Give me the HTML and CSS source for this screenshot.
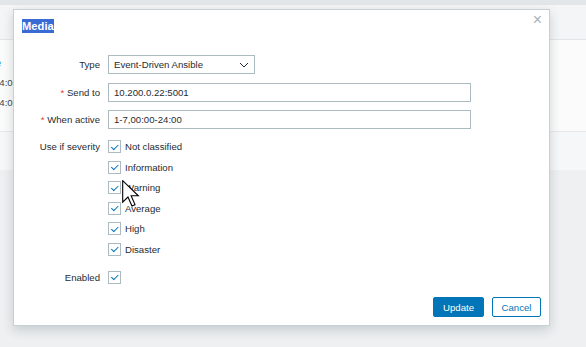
FILE: index.html
```html
<!DOCTYPE html>
<html lang="en">
<head>
  <meta charset="UTF-8" />
  <title>Media</title>
  <link rel="stylesheet" href="styles.css">
</head>
<body>

  <!-- Page behind the dialog -->
  <div class="page">
    <div class="page-top"></div>
    <div class="page-nav"></div>
    <div class="page-panel">
      <div class="page-row"><span class="link">Active</span></div>
      <div class="page-row"><span class="cut">24:00</span></div>
      <div class="page-row"><span class="cut">24:00</span></div>
    </div>
    <div class="page-foot"></div>
  </div>

  <!-- Media dialog -->
  <div class="dialog">
    <div class="dialog-head">
      <h4 class="dialog-title">Media</h4>
      <span class="close">&times;</span>
    </div>

    <form class="form">
      <div class="row">
        <label class="label">Type</label>
        <div class="select">
          <span>Event-Driven Ansible</span>
          <svg width="10" height="6" viewBox="0 0 10 6"><polyline points="1,1 5,5 9,1" fill="none" stroke="#1f2c33" stroke-width="1"/></svg>
        </div>
      </div>

      <div class="row row-send">
        <label class="label"><i class="req">*</i> Send to</label>
        <div class="input">10.200.0.22:5001</div>
      </div>

      <div class="row row-active">
        <label class="label"><i class="req">*</i> When active</label>
        <div class="input">1-7,00:00-24:00</div>
      </div>

      <div class="row row-top row-severity">
        <label class="label">Use if severity</label>
        <ul class="checks">
          <li><span class="box"></span>Not classified</li>
          <li><span class="box"></span>Information</li>
          <li><span class="box"></span>Warning</li>
          <li><span class="box"></span>Average</li>
          <li><span class="box"></span>High</li>
          <li><span class="box"></span>Disaster</li>
        </ul>
      </div>

      <div class="row row-top row-enabled">
        <label class="label">Enabled</label>
        <ul class="checks">
          <li><span class="box"></span></li>
        </ul>
      </div>
    </form>

    <div class="dialog-foot">
      <button class="btn btn-primary" type="button">Update</button>
      <button class="btn btn-alt" type="button">Cancel</button>
    </div>
  </div>

  <!-- Mouse pointer -->
  <svg class="cursor" width="18" height="27" viewBox="0 0 13 19.5">
    <path d="M0.5,0.5 L0.5,16 L4.3,12.3 L7.2,18.8 L9.4,17.8 L6.6,11.4 L11.8,11.4 Z" fill="#fff" stroke="#000" stroke-width="0.8" stroke-linejoin="miter"/>
  </svg>

</body>
</html>
```

FILE: styles.css
```css
:root {
  --text: #1f2c33;
  --border: #acbbc2;
  --blue: #0275b8;
  --red: #e33734;
}

body {
  margin: 0;
  font-family: "Liberation Sans", Arial, sans-serif;
  font-size: 9.6px;
  color: var(--text);
  background: #eef0f1;
  overflow: hidden;
}

/* Page behind the dialog */
.page {
  height: 347px;
}

.page-top {
  height: 5px;
  background: #e3e6e8;
}

.page-nav {
  height: 34px;
  background: #f4f5f6;
  border-bottom: 1px solid #e3e6e8;
}

.page-panel {
  box-sizing: border-box;
  height: 92px;
  padding-top: 13px;
  background: #fbfbfb;
  border-bottom: 1px solid #e6e9eb;
}

.page-row {
  height: 20px;
  line-height: 20px;
  margin-left: -25px;
}

.page-row .link {
  color: var(--blue);
}

.page-row .cut {
  margin-left: 19px;
  color: #3b474e;
}

.page-foot {
  height: 38px;
  background: #f6f7f8;
}

/* Dialog */
.dialog {
  position: absolute;
  left: 13px;
  top: 9px;
  width: 537px;
  height: 317px;
  box-sizing: border-box;
  background: #fff;
  border: 1px solid #c6d0d5;
  box-shadow: 0 4px 10px rgba(60, 80, 90, 0.22);
  display: flex;
  flex-direction: column;
}

.dialog-head {
  position: relative;
  padding: 9px 8px 0;
}

.dialog-title {
  display: inline-block;
  margin: 0;
  font-size: 11.2px;
  line-height: 14px;
  font-weight: bold;
  background: #3a6bd4;
  color: #fff;
}

.close {
  position: absolute;
  right: 7px;
  top: 1px;
  font-size: 16px;
  color: #a9b4ba;
}

/* Form */
.form {
  margin-top: 22px;
}

.row {
  display: flex;
  align-items: center;
  column-gap: 8px;
}

.row-top {
  align-items: flex-start;
}

.row-send {
  margin-top: 9px;
}

.row-active {
  margin-top: 8px;
}

.row-severity {
  margin-top: 11px;
}

.row-enabled {
  margin-top: 15px;
}

.label {
  width: 86px;
  flex-shrink: 0;
  text-align: right;
  line-height: 13px;
}

.req {
  font-style: normal;
  color: var(--red);
}

.select,
.input {
  height: 19px;
  box-sizing: border-box;
  border: 1px solid var(--border);
  padding: 0 5px;
  line-height: 17px;
  display: flex;
  align-items: center;
}

.select {
  width: 147px;
  justify-content: space-between;
}

.input {
  width: 363px;
}

.checks {
  list-style: none;
  margin: 0;
  padding: 0;
  display: flex;
  flex-direction: column;
  gap: 7.5px;
}

.checks li {
  display: flex;
  align-items: center;
  gap: 4px;
  height: 13px;
  line-height: 13px;
}

.box {
  width: 13px;
  height: 13px;
  box-sizing: border-box;
  border: 1px solid var(--border);
  position: relative;
}

.box::after {
  content: "";
  position: absolute;
  left: 3.5px;
  top: 1.5px;
  width: 3px;
  height: 5.5px;
  border-right: 1.3px solid var(--blue);
  border-bottom: 1.3px solid var(--blue);
  transform: rotate(45deg);
}

/* Footer buttons */
.dialog-foot {
  margin-top: auto;
  display: flex;
  justify-content: flex-end;
  gap: 8px;
  padding: 0 8px 8px;
}

.btn {
  height: 20px;
  box-sizing: border-box;
  font-family: inherit;
  font-size: 9.6px;
  border-radius: 2px;
  cursor: pointer;
  padding: 0;
}

.btn-primary {
  width: 51px;
  background: var(--blue);
  border: 1px solid var(--blue);
  color: #fff;
}

.btn-alt {
  width: 49px;
  background: #fff;
  border: 1px solid var(--blue);
  color: var(--blue);
}

.cursor {
  position: absolute;
  left: 121.5px;
  top: 179.5px;
}
```
